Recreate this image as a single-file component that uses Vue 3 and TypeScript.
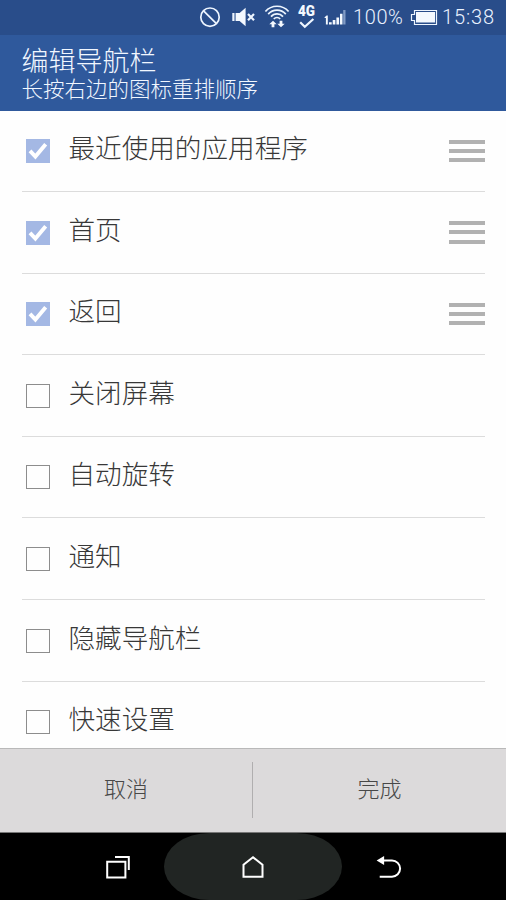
<script setup lang="ts">
import { ref } from 'vue'

interface NavItem {
  label: string
  checked: boolean
}

const items = ref<NavItem[]>([
  { label: '最近使用的应用程序', checked: true },
  { label: '首页', checked: true },
  { label: '返回', checked: true },
  { label: '关闭屏幕', checked: false },
  { label: '自动旋转', checked: false },
  { label: '通知', checked: false },
  { label: '隐藏导航栏', checked: false },
  { label: '快速设置', checked: false },
])

function toggle(item: NavItem) {
  item.checked = !item.checked
}
</script>

<template>
  <div class="screen">
    <div class="status">
      <svg class="icon-ban" viewBox="0 0 24 35" width="24" height="35">
        <circle cx="12" cy="17.2" r="9.2" />
        <path d="M5.6 10.8 18.4 23.6" />
      </svg>
      <svg class="icon-mute" viewBox="0 0 26 35" width="26" height="35">
        <path class="fill" d="M5.600 13h4l6-5.200v18.400l-6-5.200h-4z" />
        <path class="thick" d="M3.400 13v8M18 14l6 6.200M24 14l-6 6.200" />
      </svg>
      <svg class="icon-wifi" viewBox="0 0 26 35" width="26" height="35">
        <path d="M1.400 11.500c6-7 17.200-7 23.200 0M4.200 14.100c4.700-5.400 12.900-5.400 17.600 0M7 16.600c3.200-3.700 8.800-3.700 12 0M9.800 19c1.800-2 4.600-2 6.400 0" />
        <path class="fill" d="M9 20.800l3.700 3.500h-2.300v2.900H7.600v-2.900H5.300zM17 27.200l-3.700-3.500h2.300v-2.900h2.800v2.900h2.300z" />
      </svg>
      <svg class="icon-lte" viewBox="0 0 20 35" width="20" height="35">
        <text x="1" y="15.600" textLength="17" lengthAdjust="spacingAndGlyphs">4G</text>
        <path class="thick" d="M3.200 22.200l4.600 4.500 8.600-7.700" />
      </svg>
      <svg class="icon-signal" viewBox="0 0 24 35" width="24" height="35">
        <path class="fill" d="M1.600 17.200l2-1.700h1.200v9H2.900v-6.500H1.600zM6 22.200h2.700v2.300H6zM9.700 20h2.700v4.500H9.700zM13.400 17.400h2.700v7.100h-2.700zM17 13.700h2.500v10.800H17z" />
        <path class="dim" d="M20.200 10h2.300v14.500h-2.300z" />
      </svg>
      <span class="percent">100%</span>
      <svg class="icon-battery" viewBox="0 0 28 35" width="28" height="35">
        <path class="thin" d="M4.500 10.500h22v14h-22v-4h-3v-6h3z" />
        <path class="fill" d="M6 12h19v10.500H6z" />
      </svg>
      <span class="clock">15:38</span>
    </div>

    <header class="header">
      <h1 class="title">编辑导航栏</h1>
      <p class="subtitle">长按右边的图标重排顺序</p>
    </header>

    <ul class="list">
      <li v-for="item in items" :key="item.label" class="row" @click="toggle(item)">
        <span class="box" :class="{ on: item.checked }">
          <svg v-if="item.checked" viewBox="0 0 24 24" width="24" height="24">
            <path d="M4 11.800l5.400 5.700L19.700 5.300" />
          </svg>
        </span>
        <span class="label">{{ item.label }}</span>
        <span v-if="item.checked" class="handle"><i></i><i></i><i></i></span>
      </li>
    </ul>

    <div class="actions">
      <button class="action cancel">取消</button>
      <span class="split"></span>
      <button class="action">完成</button>
    </div>

    <nav class="navbar">
      <div class="nav recent">
        <svg viewBox="0 0 26 26" width="26" height="26">
          <path d="M2.200 7.800h18.200v15.600H2.200z" />
          <path class="back" d="M10 3h13.800v13" />
        </svg>
      </div>
      <div class="nav home">
        <svg viewBox="0 0 26 26" width="26" height="26">
          <path d="M3.500 22.700V10.800L13 3.200l9.500 7.600v11.900z" />
        </svg>
      </div>
      <div class="nav return">
        <svg viewBox="0 0 26 26" width="26" height="26">
          <path d="M6.500 6.500h9.500a8.100 8.100 0 0 1 0 16.200H3.700" />
          <path class="arrow" d="M.600 6.500l7.500-4.400v8.800z" />
        </svg>
      </div>
    </nav>
  </div>
</template>

<style>
body {
  margin: 0;
}
</style>

<style scoped>
.screen {
  width: 506px;
  height: 900px;
  display: flex;
  flex-direction: column;
  overflow: hidden;
  background: #fefefe;
  font-family: 'Noto Sans CJK SC', sans-serif;
  font-weight: 300;
}
.status {
  flex: none;
  height: 35px;
  display: flex;
  align-items: center;
  padding-left: 198px;
  background: #294d8a;
  color: #e9f2ff;
  font-family: Roboto, sans-serif;
  font-size: 20px;
  line-height: 35px;
  white-space: nowrap;
}
.status svg {
  flex: none;
  fill: none;
  stroke: #edf5ff;
  stroke-width: 1.7;
}
.status .thick {
  stroke-width: 2.200;
}
.status .thin {
  stroke-width: 1.200;
}
.status .fill {
  fill: #f4f9ff;
  stroke: none;
}
.status .dim {
  fill: #819bc5;
  stroke: none;
}
.icon-mute {
  margin-left: 8px;
}
.icon-wifi {
  margin-left: 8px;
}
.icon-lte {
  margin-left: 7px;
}
.icon-lte text {
  font: 900 14px Roboto, sans-serif;
  fill: #f4f9ff;
  stroke: none;
}
.icon-signal {
  margin-left: 6px;
}
.percent {
  width: 57px;
  margin-left: 6px;
  letter-spacing: 0.6px;
}
.clock {
  margin-left: 4px;
  letter-spacing: 0.9px;
}
.header {
  flex: none;
  height: 75.500px;
  box-sizing: border-box;
  padding: 8.500px 21.500px 0;
  background: #2f599c;
  color: #f1f7ff;
}
.title {
  margin: 0;
  font-size: 27px;
  line-height: 32px;
  font-weight: 300;
}
.subtitle {
  margin: 0;
  font-size: 21.500px;
  line-height: 23px;
}
.list {
  flex: 1;
  min-height: 0;
  overflow: hidden;
  margin: 0;
  padding: 0 21px 0 22px;
  list-style: none;
}
.row {
  height: 81.600px;
  box-sizing: border-box;
  display: flex;
  align-items: flex-start;
  border-bottom: 1px solid #dcdcdc;
}
.box {
  flex: none;
  width: 24px;
  height: 24px;
  box-sizing: border-box;
  margin: 28.600px 0 0 4px;
  border: 1px solid #8d8d8d;
}
.box.on {
  border: 0;
  background: #a4b8e4;
}
.box svg {
  display: block;
  fill: none;
  stroke: #fff;
  stroke-width: 3.900;
}
.label {
  flex: 1;
  margin: 16.600px 0 0 18.500px;
  color: #383838;
  font-size: 26.600px;
  line-height: 40px;
}
.handle {
  display: flex;
  flex-direction: column;
  gap: 5.400px;
  width: 36px;
  margin-top: 29px;
}
.handle i {
  height: 4px;
  background: #b1b1b1;
}
.actions {
  flex: none;
  height: 85px;
  box-sizing: border-box;
  display: flex;
  align-items: stretch;
  border-top: 1px solid #b9b9b9;
  border-bottom: 1px solid #777;
  background: #dcdadb;
}
.action {
  flex: 1;
  border: 0;
  padding: 0 0 8px;
  background: none;
  color: #484848;
  font: inherit;
  font-size: 22px;
}
.cancel {
  flex: none;
  width: 252px;
}
.split {
  width: 1px;
  margin: 13px 0 14px;
  background: #b0aeaf;
}
.navbar {
  flex: none;
  height: 67px;
  display: flex;
  background: #000;
}
.nav {
  display: flex;
  justify-content: center;
  align-items: center;
}
.nav svg {
  fill: none;
  stroke: #fff;
  stroke-width: 2;
}
.recent {
  width: 93px;
  padding-left: 71px;
}
.home {
  width: 178px;
  border-radius: 46px / 34px;
  background: #212523;
}
.return {
  width: 93px;
}
.return .arrow {
  fill: #fff;
  stroke: none;
}
</style>
